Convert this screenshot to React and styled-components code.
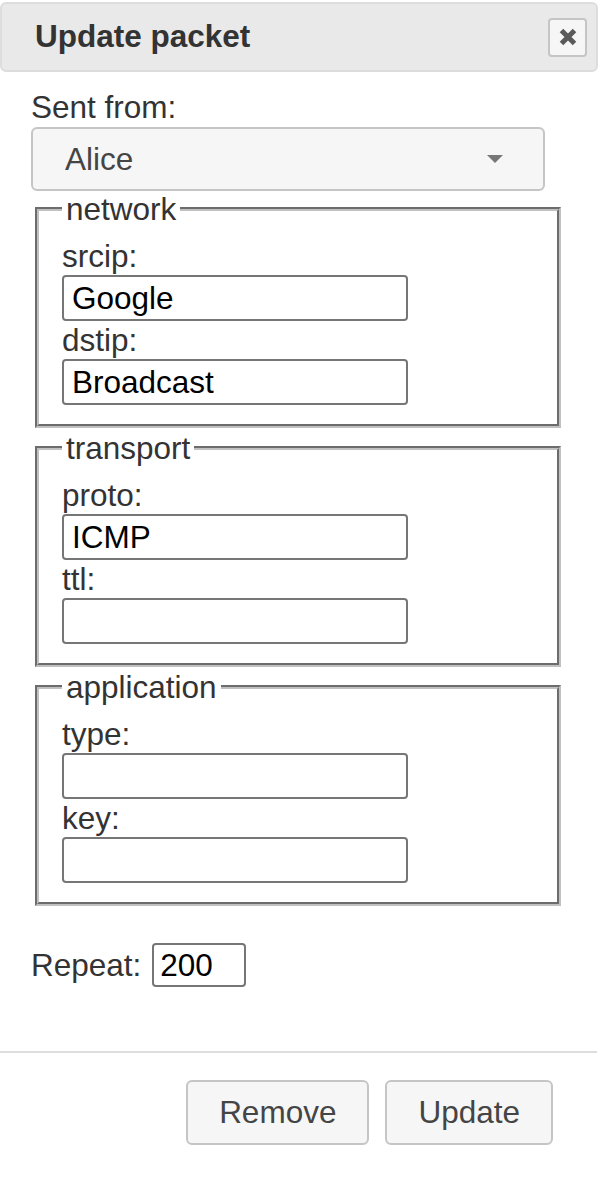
import React from 'react'
import styled, { createGlobalStyle } from 'styled-components'

const GlobalStyle = createGlobalStyle`
  body {
    margin: 0;
    background: #fff;
    font-family: "Liberation Sans", Arial, sans-serif;
  }
`

const Dialog = styled.div`
  width: 598px;
  box-sizing: border-box;
`

const TitleBar = styled.div`
  margin-top: 2px;
  height: 70px;
  box-sizing: border-box;
  border: 2px solid #dddddd;
  border-radius: 6px;
  background: #e9e9e9;
  display: flex;
  align-items: center;
  justify-content: space-between;
  padding: 0 9px 0 33px;
`

const Title = styled.span`
  font-size: 31.5px;
  font-weight: bold;
  line-height: 36px;
  color: #333333;
  margin-top: -2px;
`

const CloseButton = styled.button`
  width: 39px;
  height: 39px;
  box-sizing: border-box;
  padding: 0;
  border: 2px solid #c5c5c5;
  border-radius: 4px;
  background: #f6f6f6;
  display: flex;
  align-items: center;
  justify-content: center;
`

const Content = styled.div`
  padding: 17px 33px 0 31px;
`

const TopLabel = styled.label`
  display: block;
  font-size: 31.5px;
  line-height: 36px;
  color: #333333;
  margin-bottom: 2px;
`

const SelectMenu = styled.span`
  display: flex;
  align-items: center;
  justify-content: space-between;
  width: 514px;
  height: 64px;
  box-sizing: border-box;
  border: 2px solid #c5c5c5;
  border-radius: 6px;
  background: #f6f6f6;
  color: #454545;
  font-size: 31.5px;
  padding: 0 40px 0 32px;
`

const Group = styled.fieldset`
  margin: 0 4px;
  padding: 10px 0 19px 23px;
  border: 4px groove #c0c0c0;
  min-width: 0;

  & + & {
    margin-top: 2px;
  }
`

const Legend = styled.legend`
  padding: 0 4px;
  font-size: 31.5px;
  line-height: 36px;
  color: #333333;
`

const FieldLabel = styled.label`
  display: block;
  font-size: 31.5px;
  line-height: 38px;
  color: #333333;
`

const TextInput = styled.input`
  display: block;
  width: ${p => p.$width || 346}px;
  height: ${p => p.$height || 46}px;
  box-sizing: border-box;
  margin: 0;
  border: 2px solid #767676;
  border-radius: 4px;
  padding: 0 ${p => p.$pad || 8}px;
  font-family: "Liberation Sans", Arial, sans-serif;
  font-size: 31.5px;
  color: #000;
  background: #fff;
  outline: none;
`

const RepeatRow = styled.div`
  display: flex;
  align-items: center;
  gap: 11px;
  height: 44px;
  margin-top: 37px;
  font-size: 31.5px;
  color: #333333;
`

const ButtonPane = styled.div`
  width: 597px;
  margin-top: 64px;
  border-top: 2px solid #dddddd;
  display: flex;
  justify-content: flex-end;
  gap: 16px;
  padding: 27px 44px 35px 0;
  box-sizing: border-box;
`

const Button = styled.button`
  height: 65px;
  padding: 0 31px;
  border: 2px solid #c5c5c5;
  border-radius: 6px;
  background: #f6f6f6;
  color: #454545;
  font-family: "Liberation Sans", Arial, sans-serif;
  font-size: 31.5px;
`

function Field({ label, value }) {
  return (
    <>
      <FieldLabel>{label}</FieldLabel>
      <TextInput defaultValue={value} />
    </>
  )
}

const groups = [
  { name: 'network', fields: [['srcip:', 'Google'], ['dstip:', 'Broadcast']] },
  { name: 'transport', fields: [['proto:', 'ICMP'], ['ttl:', '']] },
  { name: 'application', fields: [['type:', ''], ['key:', '']] },
]

export default function App() {
  return (
    <Dialog>
      <GlobalStyle />
      <TitleBar>
        <Title>Update packet</Title>
        <CloseButton aria-label="close">
          <svg width="20" height="20" viewBox="0 0 20 20">
            <path d="M3.5 3.5 L16.5 16.5 M16.5 3.5 L3.5 16.5" stroke="#5a5a5a" strokeWidth="5" />
          </svg>
        </CloseButton>
      </TitleBar>

      <Content>
        <TopLabel>Sent from:</TopLabel>
        <SelectMenu>
          <span>Alice</span>
          <svg width="16" height="8" viewBox="0 0 16 8">
            <path d="M0 0 H16 L8 8 Z" fill="#777" />
          </svg>
        </SelectMenu>

        {groups.map(g => (
          <Group key={g.name}>
            <Legend>{g.name}</Legend>
            {g.fields.map(([label, value]) => (
              <Field key={label} label={label} value={value} />
            ))}
          </Group>
        ))}

        <RepeatRow>
          <span>Repeat:</span>
          <TextInput defaultValue="200" $width={94} $height={44} $pad={6} />
        </RepeatRow>
      </Content>

      <ButtonPane>
        <Button>Remove</Button>
        <Button>Update</Button>
      </ButtonPane>
    </Dialog>
  )
}
